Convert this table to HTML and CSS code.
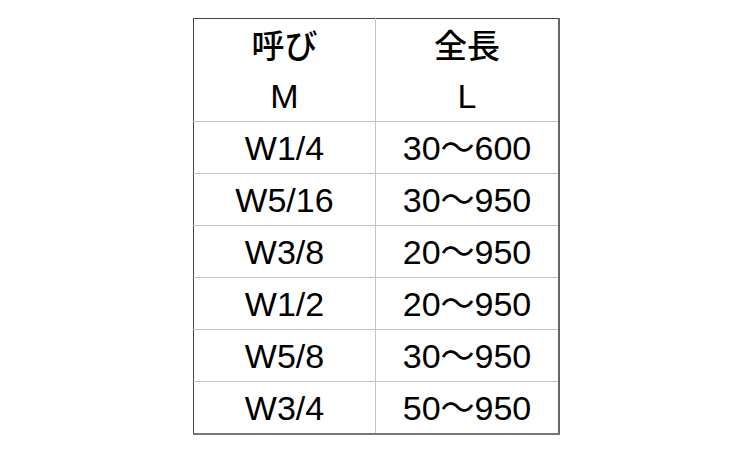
FILE: index.html
```html
<!DOCTYPE html>
<html lang="ja">
<head>
<meta charset="utf-8">
<link rel="stylesheet" href="styles.css">
</head>
<body>
<div class="page">
  <table class="spec">
    <tbody>
      <tr class="head head-top"><td>呼び</td><td>全長</td></tr>
      <tr class="head head-bottom"><td>M</td><td>L</td></tr>
      <tr><td>W1/4</td><td>30〜600</td></tr>
      <tr><td>W5/16</td><td>30〜950</td></tr>
      <tr><td>W3/8</td><td>20〜950</td></tr>
      <tr><td>W1/2</td><td>20〜950</td></tr>
      <tr><td>W5/8</td><td>30〜950</td></tr>
      <tr><td>W3/4</td><td>50〜950</td></tr>
    </tbody>
  </table>
</div>
</body>
</html>
```
FILE: styles.css
```css
html, body {
  margin: 0;
  padding: 0;
  background: #ffffff;
}
.page {
  width: 750px;
  height: 450px;
  box-sizing: border-box;
  padding: 18px 0 0 193px;
}
.spec {
  border-collapse: collapse;
  border-top: 1px solid #444;
  border-left: 1px solid #444;
  border-right: 2px solid #666;
  border-bottom: 2px solid #777;
  font-family: "Liberation Sans", "Noto Sans CJK JP", sans-serif;
  font-size: 34px;
  color: #000;
}
.spec td {
  height: 51px;
  padding: 0;
  text-align: center;
  vertical-align: middle;
  border-top: 1px solid #c4c4c4;
  line-height: 1;
}
.spec td:first-child {
  width: 181px;
  border-right: 1px solid #c4c4c4;
}
.spec td:last-child {
  width: 182px;
}
.spec .head-top td {
  border-top: none;
  font-family: "Noto Sans CJK JP", sans-serif;
  font-size: 33px;
  font-weight: 500;
}
.spec .head-bottom td {
  border-top: none;
}
```
